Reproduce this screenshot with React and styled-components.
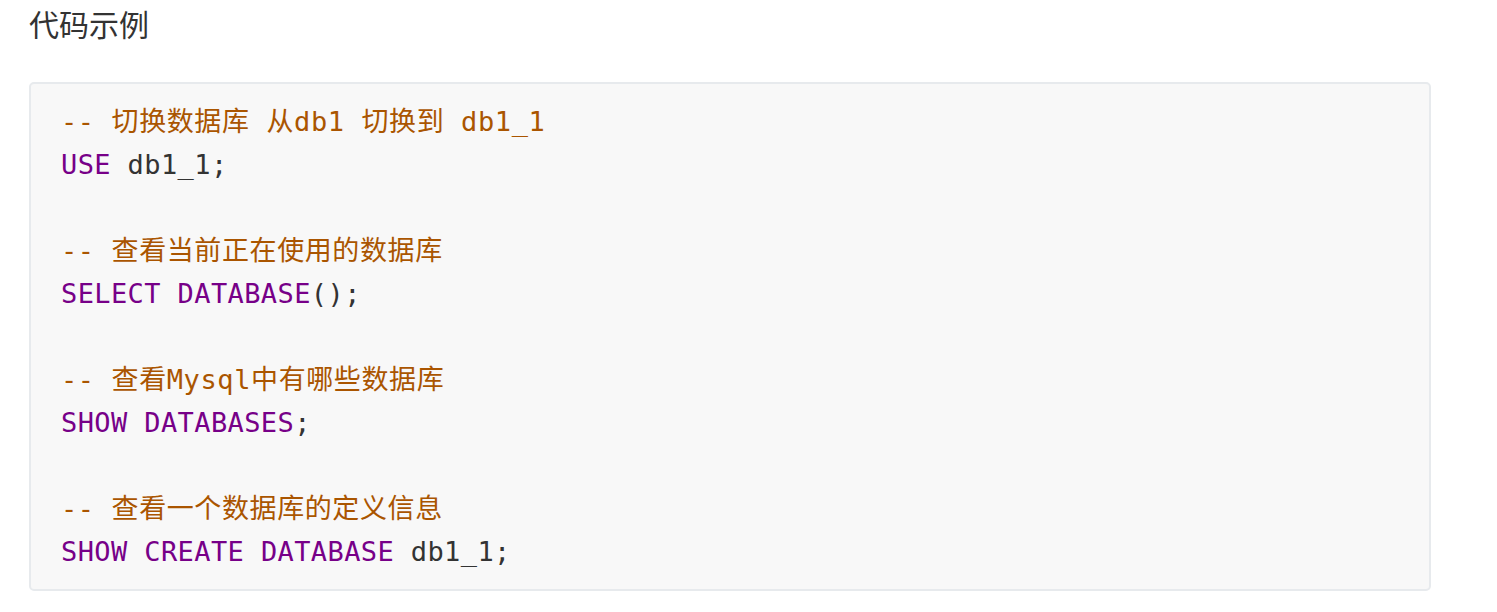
import React from "react";
import styled, { createGlobalStyle } from "styled-components";

const Global = createGlobalStyle`
  html, body { margin: 0; padding: 0; background: #ffffff; }
`;

const Page = styled.div`
  padding: 0 66px 0 29px;
  font-family: "Noto Sans CJK SC", "Noto Sans", sans-serif;
  color: #333333;
`;

const Title = styled.h2`
  margin: 0;
  font-size: 30px;
  font-weight: 400;
  line-height: 47px;
  color: #333333;
`;

const Fences = styled.pre`
  margin: 35px 0 0;
  width: 1402px;
  box-sizing: border-box;
  background: #f8f8f8;
  border: 2px solid #e7eaed;
  border-radius: 5px;
  padding: 16px 30px;
  font-family: "DejaVu Sans Mono", "Noto Sans CJK SC", monospace;
  font-size: 27px;
  letter-spacing: 0.4px;
  line-height: 43px;
  color: #333333;
  white-space: pre;
`;

const Line = styled.div`
  height: 43px;
`;

const Tok = styled.span`
  color: ${(p) =>
    p.$k === "comment" ? "#aa5500" : p.$k === "keyword" ? "#770088" : "#333333"};
  letter-spacing: ${(p) => (p.$k === "comment" ? "0.6px" : "0.4px")};
`;

const code = [
  [["comment", "-- 切换数据库 从db1 切换到 db1_1"]],
  [["keyword", "USE"], ["plain", " db1_1;"]],
  [],
  [["comment", "-- 查看当前正在使用的数据库"]],
  [["keyword", "SELECT"], ["plain", " "], ["keyword", "DATABASE"], ["plain", "();"]],
  [],
  [["comment", "-- 查看Mysql中有哪些数据库"]],
  [["keyword", "SHOW"], ["plain", " "], ["keyword", "DATABASES"], ["plain", ";"]],
  [],
  [["comment", "-- 查看一个数据库的定义信息"]],
  [
    ["keyword", "SHOW"],
    ["plain", " "],
    ["keyword", "CREATE"],
    ["plain", " "],
    ["keyword", "DATABASE"],
    ["plain", " db1_1;"],
  ],
];

export default function App() {
  return (
    <Page>
      <Global />
      <Title>代码示例</Title>
      <Fences>
        {code.map((line, i) => (
          <Line key={i}>
            {line.map(([k, t], j) => (
              <Tok key={j} $k={k}>
                {t}
              </Tok>
            ))}
          </Line>
        ))}
      </Fences>
    </Page>
  );
}
